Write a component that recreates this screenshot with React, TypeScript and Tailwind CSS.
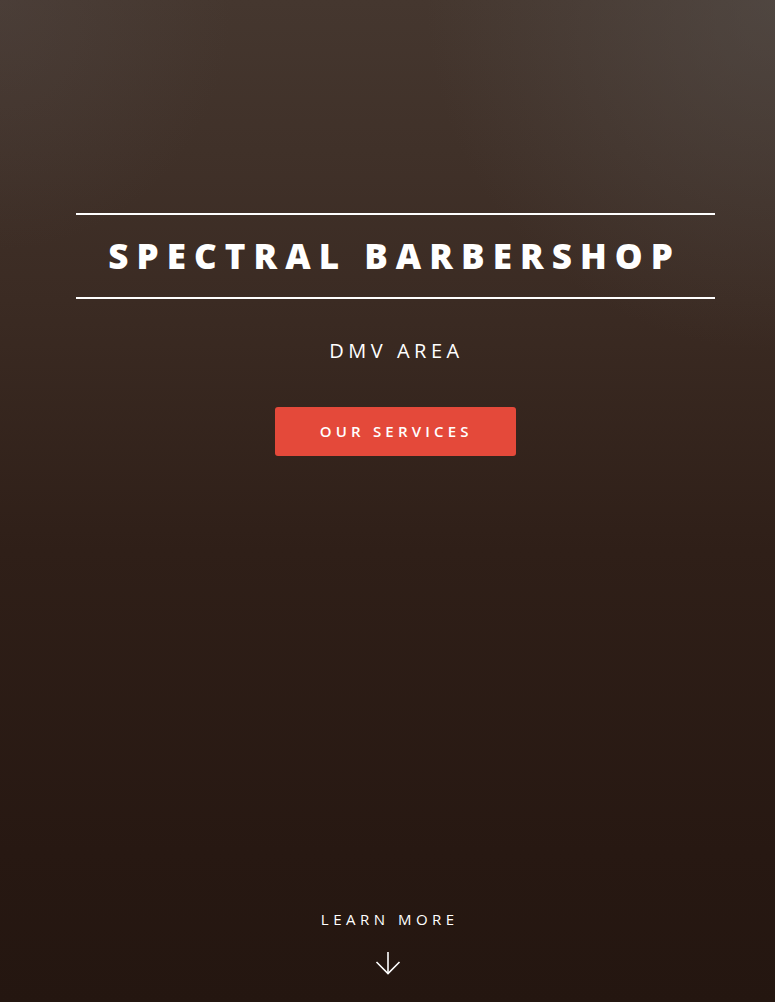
export default function App() {
  return (
    <div
      className="flex h-[1002px] w-full flex-col items-center overflow-hidden bg-[radial-gradient(ellipse_45%_35%_at_100%_0%,rgba(90,85,82,0.5),transparent),radial-gradient(ellipse_30%_25%_at_0%_0%,rgba(85,75,72,0.35),transparent),linear-gradient(to_bottom,#45372f_0%,#3b2b23_30%,#2f1f18_55%,#271812_85%,#241610_100%)] text-white"
      style={{ fontFamily: '"Open Sans", "Liberation Sans", sans-serif' }}
    >
      {/* Banner */}
      <div className="flex flex-col items-center pl-4 pt-[213px]">
        <h2 className="flex h-[86px] w-[639px] items-center justify-center border-y-2 border-white text-[35px] font-extrabold uppercase tracking-[0.23em]">
          <span className="pr-[0.05em]">Spectral Barbershop</span>
        </h2>

        <p className="mt-[38px] text-[20px] uppercase leading-[28px] tracking-[0.225em]">
          <span className="pl-[0.1em]">DMV Area</span>
        </p>

        <button className="mt-[42px] flex h-[49px] w-[241px] items-center justify-center rounded-[3px] bg-[#e4493a] text-[15px] font-semibold uppercase tracking-[0.28em]">
          <span className="pl-[0.1em]">Our Services</span>
        </button>
      </div>

      {/* Learn More */}
      <div className="mt-auto flex flex-col items-center pb-[27px]">
        <span className="pl-[0.3em] text-[15px] uppercase leading-[20px] tracking-[0.3em]">
          Learn More
        </span>
        <svg
          width="26"
          height="24"
          viewBox="0 0 26 24"
          fill="none"
          stroke="currentColor"
          strokeWidth="1.6"
          className="ml-[2px] mt-[22px]"
        >
          <line x1="13" y1="1" x2="13" y2="22.5" />
          <polyline points="1.5,11 13,22.5 24.5,11" />
        </svg>
      </div>
    </div>
  );
}
